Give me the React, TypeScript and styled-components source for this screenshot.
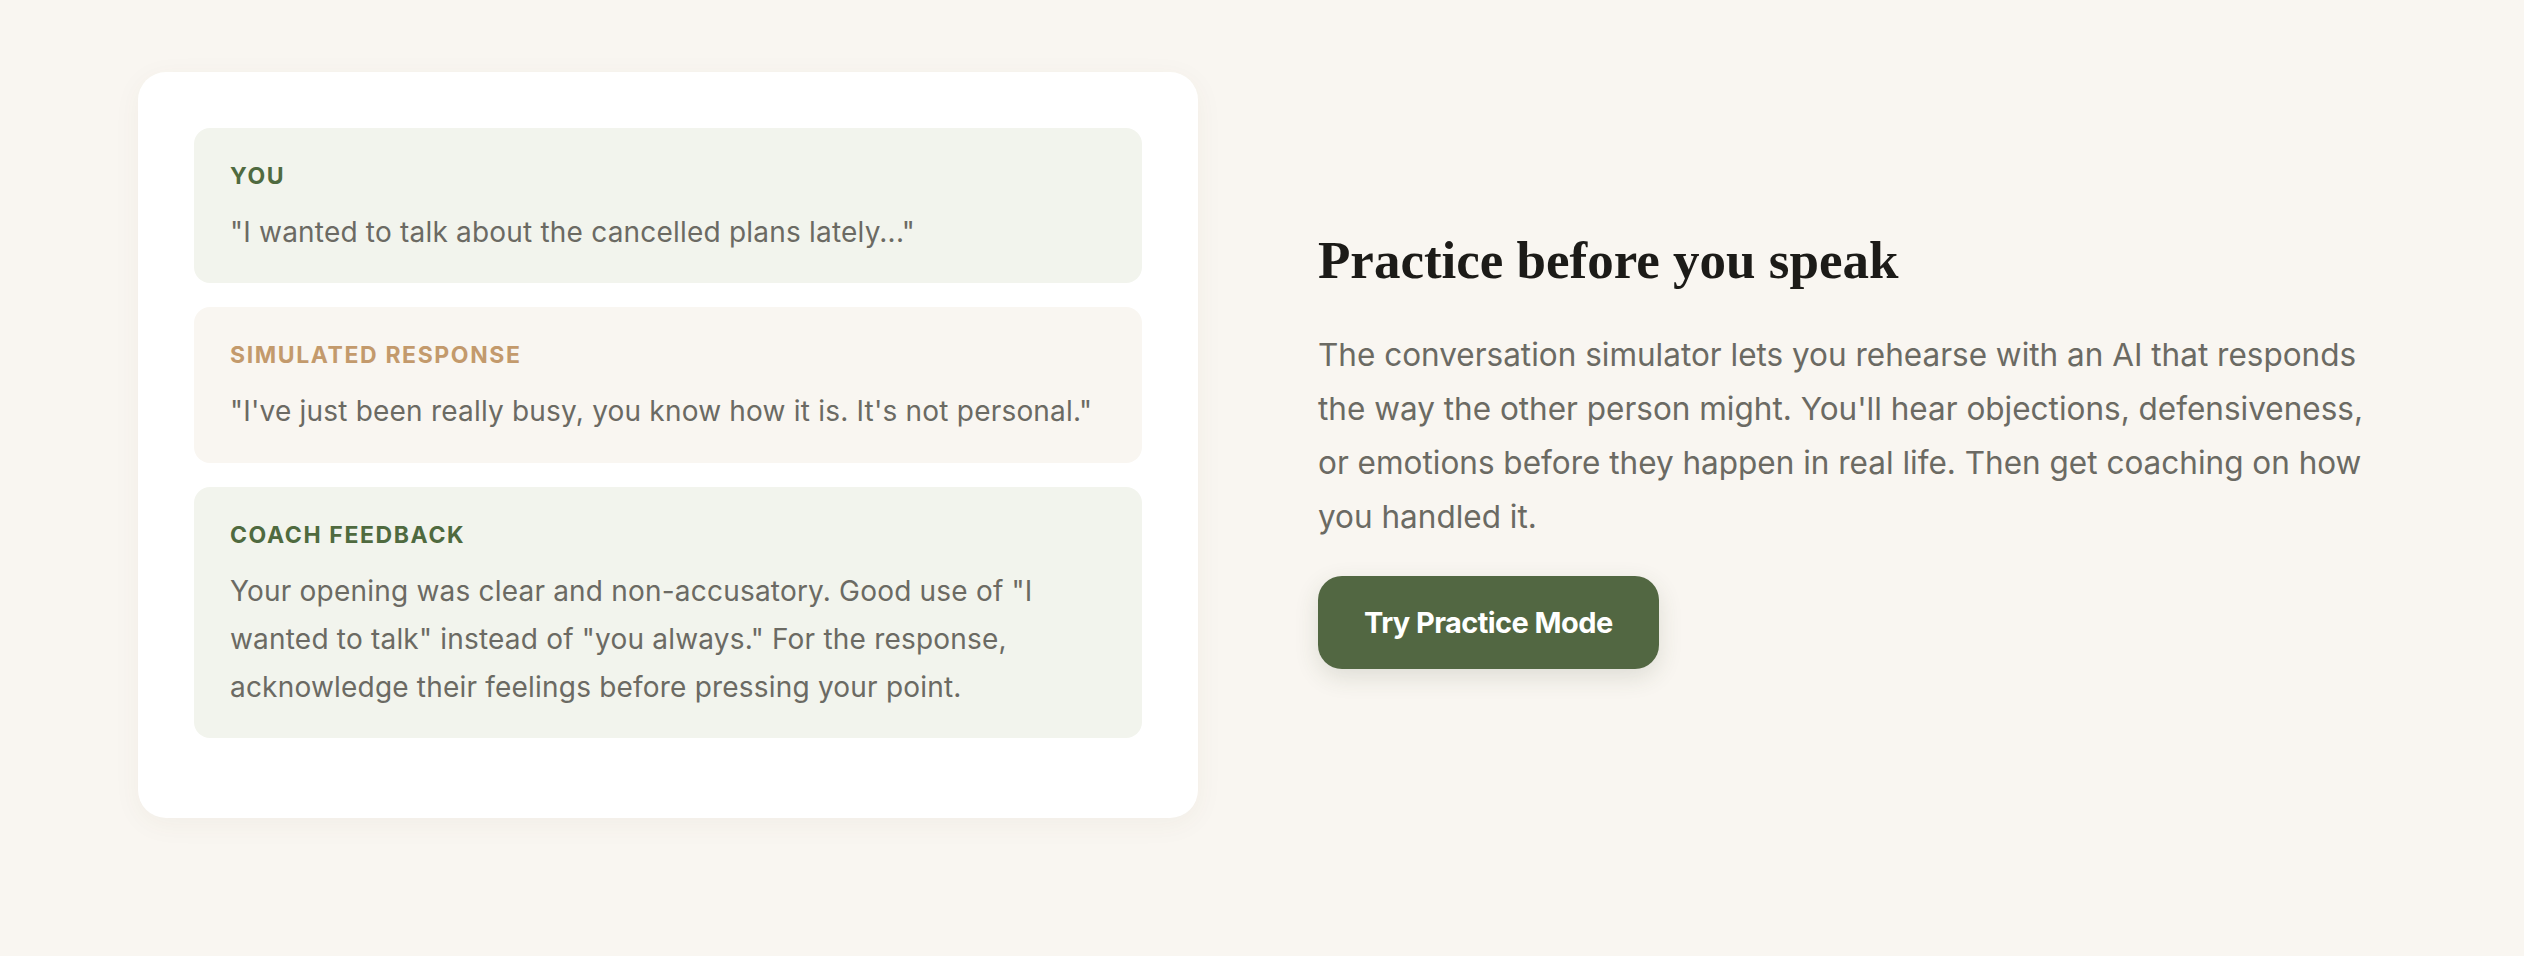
import React from 'react';
import styled, { createGlobalStyle } from 'styled-components';

const GlobalStyle = createGlobalStyle`
  html, body {
    margin: 0;
    padding: 0;
    background: #f9f6f1;
  }
  body {
    font-family: Inter, "Noto Sans", sans-serif;
    -webkit-font-smoothing: antialiased;
  }
`;

const Section = styled.section`
  display: grid;
  grid-template-columns: 1060px 1060px;
  column-gap: 120px;
  align-items: center;
  padding: 72px 146px 138px 138px;
  background: #f9f6f1;
`;

const Card = styled.div`
  background: #ffffff;
  border-radius: 28px;
  padding: 56px 56px 80px;
  display: flex;
  flex-direction: column;
  gap: 24px;
  box-shadow: 0 6px 28px rgba(90, 70, 40, 0.05);
`;

type Variant = 'you' | 'sim' | 'coach';

const bubbleBg: Record<Variant, string> = {
  you: '#f2f4ed',
  sim: '#f9f6f1',
  coach: '#f2f4ed',
};

const labelColor: Record<Variant, string> = {
  you: '#4f6a3f',
  sim: '#c39a6c',
  coach: '#4f6a3f',
};

const Bubble = styled.div<{ $variant: Variant }>`
  background: ${(p) => bubbleBg[p.$variant]};
  border-radius: 16px;
  padding: 34px 36px 27px;
`;

const Label = styled.div<{ $variant: Variant }>`
  font-size: 23px;
  line-height: 28px;
  font-weight: 700;
  letter-spacing: 0.07em;
  text-transform: uppercase;
  color: ${(p) => labelColor[p.$variant]};
  margin-bottom: 18px;
`;

const BubbleText = styled.p`
  margin: 0;
  font-size: 28px;
  line-height: 48.3px;
  color: #6b6a63;
  letter-spacing: 0.2px;
`;

const Copy = styled.div`
  display: flex;
  flex-direction: column;
  align-items: flex-start;
  padding-top: 8px;
`;

const Heading = styled.h2`
  margin: 0 0 35px;
  font-family: "Liberation Serif", "DejaVu Serif", serif;
  font-weight: 700;
  font-size: 53px;
  line-height: 1.2;
  color: #1c1b18;
`;

const Body = styled.p`
  margin: 0 0 32px;
  font-size: 31.5px;
  line-height: 54px;
  color: #6b6a63;
`;

const PrimaryButton = styled.button`
  border: none;
  cursor: pointer;
  background: #526742;
  color: #ffffff;
  font-family: Inter, "Noto Sans", sans-serif;
  font-size: 29px;
  font-weight: 700;
  letter-spacing: -0.02em;
  height: 93px;
  padding: 0 46px;
  border-radius: 24px;
  box-shadow: 0 8px 24px rgba(60, 70, 40, 0.14);
`;

const messages: { variant: Variant; label: string; text: string }[] = [
  { variant: 'you', label: 'You', text: '"I wanted to talk about the cancelled plans lately..."' },
  { variant: 'sim', label: 'Simulated Response', text: '"I\'ve just been really busy, you know how it is. It\'s not personal."' },
  {
    variant: 'coach',
    label: 'Coach Feedback',
    text: 'Your opening was clear and non-accusatory. Good use of "I wanted to talk" instead of "you always." For the response, acknowledge their feelings before pressing your point.',
  },
];

const App: React.FC = () => {
  return (
    <>
      <GlobalStyle />
      <Section>
        {/* Simulator preview */}
        <Card>
          {messages.map((m) => (
            <Bubble key={m.label} $variant={m.variant}>
              <Label $variant={m.variant}>{m.label}</Label>
              <BubbleText>{m.text}</BubbleText>
            </Bubble>
          ))}
        </Card>

        {/* Copy */}
        <Copy>
          <Heading>Practice before you speak</Heading>
          <Body>
            The conversation simulator lets you rehearse with an AI that responds the way the other person
            might. You'll hear objections, defensiveness, or emotions before they happen in real life. Then get
            coaching on how you handled it.
          </Body>
          <PrimaryButton>Try Practice Mode</PrimaryButton>
        </Copy>
      </Section>
    </>
  );
};

export default App;
